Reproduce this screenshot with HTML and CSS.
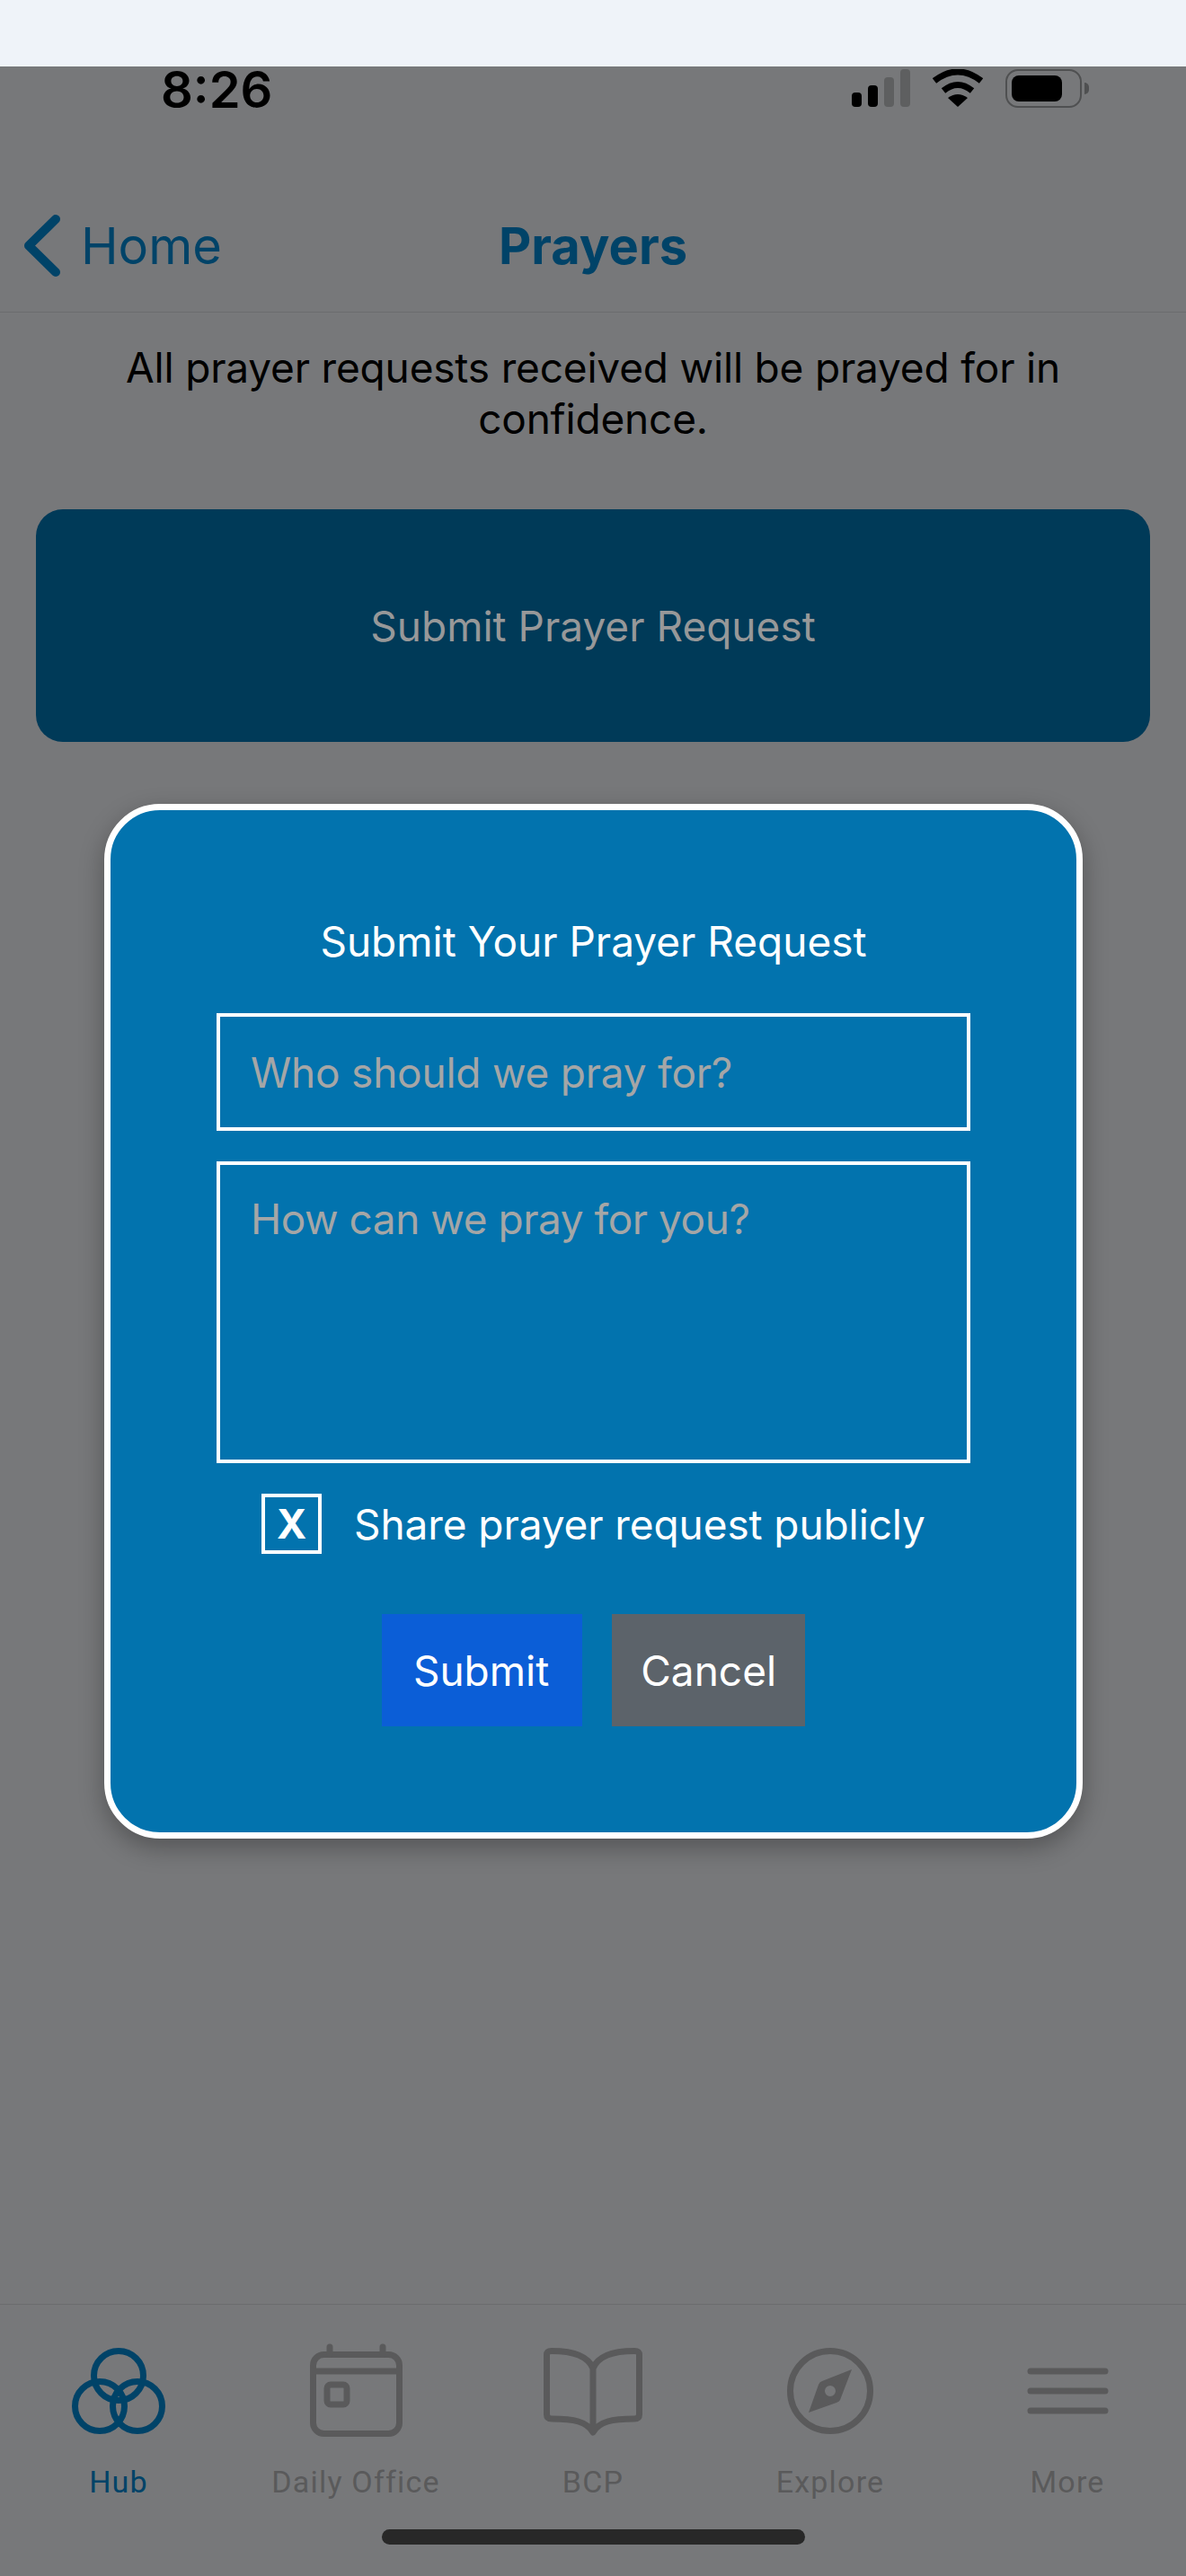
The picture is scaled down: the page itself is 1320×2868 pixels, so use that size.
FILE: index.html
```html
<!DOCTYPE html>
<html lang="en">
<head>
<meta charset="UTF-8" />
<title>Prayers</title>
<link rel="stylesheet" href="styles.css">
</head>
<body>

<div id="topbar"></div>

<div id="screen">
	<div id="status">
		<span class="time">8:26</span>
		<div class="status-icons">
			<div class="signal">
				<i class="bar1"></i><i class="bar2"></i><i class="bar3 off"></i><i class="bar4 off"></i>
			</div>
			<svg class="wifi" width="56" height="42" viewBox="0 0 56 42">
				<path d="M2 13 Q28 -7 54 13" fill="none" stroke="#000" stroke-width="7" />
				<path d="M12 24 Q28 11 44 24" fill="none" stroke="#000" stroke-width="7" />
				<path d="M17 32 Q28 24 39 32 L28 42 Z" fill="#000" />
			</svg>
			<div class="battery"><i></i></div>
			<div class="battery-cap"></div>
		</div>
	</div><!-- status -->

	<div id="nav">
		<div class="back">
			<svg width="44" height="72" viewBox="0 0 44 72">
				<path d="M37 6 L7 35.500 L37 65" fill="none" stroke="#004368" stroke-width="10" stroke-linecap="round" stroke-linejoin="round" />
			</svg>
			<span>Home</span>
		</div>
		<div class="title">Prayers</div>
	</div><!-- nav -->

	<p class="intro">All prayer requests received will be prayed for in confidence.</p>

	<div class="request-btn">Submit Prayer Request</div>

	<div id="tabbar">
		<div class="tabs">
			<div class="tab active">
				<svg width="110" height="110" viewBox="0 0 110 110" fill="none" stroke="#004368" stroke-width="7">
					<circle cx="55" cy="37" r="27.500" />
					<circle cx="34" cy="71" r="27.500" />
					<circle cx="76" cy="71" r="27.500" />
				</svg>
				<span>Hub</span>
			</div>
			<div class="tab">
				<svg width="110" height="110" viewBox="0 0 110 110" fill="none" stroke="#5a5a5b" stroke-width="7">
					<rect x="7.500" y="13.500" width="96" height="88" rx="12" />
					<path d="M7 32 H104" />
					<path d="M26 5 V13 M85 5 V13" stroke-linecap="round" />
					<rect x="23" y="47" width="22" height="22" rx="4" />
				</svg>
				<span>Daily Office</span>
			</div>
			<div class="tab">
				<svg width="110" height="110" viewBox="0 0 110 110" fill="none" stroke="#5a5a5b" stroke-width="7" stroke-linejoin="round">
					<path d="M55 29 C50 16 36 9.500 9 9.500 Q3.500 9.500 3.500 14 V80 Q3.500 85 9 85 C34 85 48 88 55 100 C62 88 76 85 101 85 Q106.500 85 106.500 80 V14 Q106.500 9.500 101 9.500 C74 9.500 60 16 55 29 V100" />
				</svg>
				<span>BCP</span>
			</div>
			<div class="tab">
				<svg width="110" height="110" viewBox="0 0 110 110" fill="none" stroke="#5a5a5b" stroke-width="7">
					<circle cx="55" cy="54" r="44.500" />
					<path d="M79 30 L66 64 Q65 66 62 67 L31 78 L42 47 Q43 44 46 43 Z M55 48 A6 6 0 1 0 55 60 A6 6 0 1 0 55 48 Z" fill="#5a5a5b" fill-rule="evenodd" stroke="none" />
				</svg>
				<span>Explore</span>
			</div>
			<div class="tab">
				<svg width="110" height="110" viewBox="0 0 110 110" fill="none" stroke="#5a5a5b" stroke-width="7" stroke-linecap="round">
					<path d="M14 32 H97 M14 54 H97 M14 76 H97" />
				</svg>
				<span>More</span>
			</div>
		</div>
		<div class="home-bar"></div>
	</div><!-- tabbar -->

	<div id="modal">
		<div class="modal-title">Submit Your Prayer Request</div>
		<div class="field field-line">Who should we pray for?</div>
		<div class="field field-area">How can we pray for you?</div>
		<div class="share">
			<div class="checkbox">X</div>
			<span>Share prayer request publicly</span>
		</div>
		<div class="actions">
			<div class="btn btn-submit">Submit</div>
			<div class="btn btn-cancel">Cancel</div>
		</div>
	</div><!-- modal -->
</div><!-- screen -->

</body>
</html>
```

FILE: styles.css
```css
body {
	margin: 0;
	background: #77787a;
	font-family: Inter, "Liberation Sans", sans-serif;
}

#topbar {
	height: 74px;
	background: #eff3f9;
}

#screen {
	position: relative;
	display: flex;
	flex-direction: column;
	height: 2794px;
	background: #77787a;
}

/* status bar */
#status {
	display: flex;
	justify-content: space-between;
	height: 126px;
	padding: 0 108px 0 179px;
	box-sizing: border-box;
}

.time {
	font-size: 56px;
	font-weight: 600;
	line-height: 52px;
	color: #000;
}

.status-icons {
	display: flex;
	align-items: flex-start;
	padding-top: 3px;
}

.signal {
	display: flex;
	align-items: flex-end;
	gap: 7px;
	height: 42px;
	margin-right: 25px;
}

.signal i {
	display: block;
	width: 11px;
	background: #000;
	border-radius: 4px;
}

.signal .bar1 { height: 16px; }
.signal .bar2 { height: 24px; }
.signal .bar3 { height: 33px; }
.signal .bar4 { height: 42px; }
.signal .off { background: #5e5f60; }

.wifi {
	margin-right: 25px;
}

.battery {
	width: 85px;
	height: 43px;
	padding: 5px;
	box-sizing: border-box;
	border: 2px solid #4f5051;
	border-radius: 14px;
}

.battery i {
	display: block;
	width: 56px;
	height: 29px;
	background: #000;
	border-radius: 8px;
}

.battery-cap {
	width: 5px;
	height: 13px;
	margin: 15px 0 0 3px;
	background: #4f5051;
	border-radius: 0 6px 6px 0;
}

/* nav header */
#nav {
	position: relative;
	display: flex;
	align-items: center;
	justify-content: center;
	height: 147px;
	border-bottom: 1px solid #6b6c6e;
	color: #004368;
	font-size: 56px;
}

.back {
	position: absolute;
	top: 38px;
	left: 25px;
	display: flex;
	align-items: center;
	gap: 21px;
}

.title {
	font-weight: 700;
}

.intro {
	width: 1100px;
	margin: 33px auto 72px;
	font-size: 46px;
	line-height: 57px;
	letter-spacing: -0.18px;
	text-align: center;
	color: #000;
}

.request-btn {
	display: flex;
	align-items: center;
	justify-content: center;
	height: 259px;
	margin: 0 40px;
	background: #003a58;
	border-radius: 30px;
	font-size: 46px;
	color: #979899;
}

/* bottom tabs */
#tabbar {
	margin-top: auto;
	height: 303px;
	box-sizing: border-box;
	border-top: 1px solid #6b6c6e;
}

.tabs {
	display: grid;
	grid-template-columns: repeat(5, 1fr);
	padding-top: 42px;
}

.tab {
	display: flex;
	flex-direction: column;
	align-items: center;
	font-family: Roboto, Inter, sans-serif;
	font-size: 34px;
	line-height: 40px;
	letter-spacing: 1.2px;
	color: #5a5a5b;
}

.tab svg {
	margin-bottom: 25px;
}

.tab.active {
	color: #004368;
}

.home-bar {
	width: 471px;
	height: 17px;
	margin: 33px auto 0;
	background: #282828;
	border-radius: 9px;
}

/* prayer request dialog */
#modal {
	position: absolute;
	top: 821px;
	left: 116px;
	display: flex;
	flex-direction: column;
	align-items: center;
	width: 1089px;
	height: 1152px;
	box-sizing: border-box;
	padding-top: 118px;
	background: #0273ae;
	border: 7px solid #fff;
	border-radius: 62px;
	box-shadow: 0 10px 28px rgba(0, 0, 0, 0.3);
	font-size: 46px;
	color: #fff;
}

.modal-title {
	line-height: 56px;
	margin-bottom: 52px;
}

.field {
	width: 839px;
	box-sizing: border-box;
	padding: 0 34px;
	border: 4px solid #fff;
	letter-spacing: -0.24px;
	color: #a5a6a6;
}

.field-line {
	display: flex;
	align-items: center;
	height: 131px;
	margin-bottom: 34px;
}

.field-area {
	height: 336px;
	padding-top: 32px;
	line-height: 56px;
	letter-spacing: -0.48px;
	margin-bottom: 34px;
}

.share {
	display: flex;
	align-items: center;
	gap: 36px;
	height: 67px;
	margin-bottom: 67px;
	letter-spacing: -0.1px;
}

.checkbox {
	display: flex;
	align-items: center;
	justify-content: center;
	width: 67px;
	height: 67px;
	box-sizing: border-box;
	border: 4px solid #fff;
	font-size: 45px;
	font-weight: 700;
}

.actions {
	display: flex;
	gap: 33px;
}

.btn {
	display: flex;
	align-items: center;
	height: 125px;
}

.btn-submit {
	padding: 0 37px 0 35px;
	background: #0b5ed7;
}

.btn-cancel {
	padding: 0 32px;
	background: #5c636a;
}
```
